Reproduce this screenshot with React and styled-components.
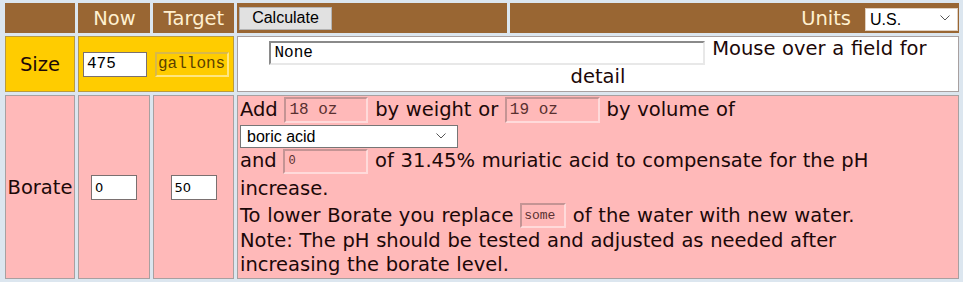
import React from 'react';
import styled, { createGlobalStyle } from 'styled-components';

const GlobalStyle = createGlobalStyle`
  html, body {
    margin: 0;
    padding: 0;
    background: #dce6ef;
  }
`;

const Grid = styled.div`
  display: grid;
  grid-template-columns: 70px 72px 81px 270px 449px;
  grid-template-rows: 30px 56px 184px;
  gap: 3px;
  padding: 3px 4px 3px 5px;
  width: max-content;
  font-family: 'DejaVu Sans', Verdana, sans-serif;
  font-size: 19.5px;
  word-spacing: 0.5px;
  color: #1c0808;
`;

const HeadCell = styled.div`
  background: #996633;
  color: #fff0d0;
  display: flex;
  align-items: center;
  justify-content: ${(p) => p.$justify || 'center'};
  gap: 14px;
  padding: 0 1px 0 2px;
  box-sizing: border-box;
`;

const Cell = styled.div`
  background: ${(p) => p.$bg};
  border: 1px solid ${(p) => p.$edge || '#a8a0a0'};
  box-sizing: border-box;
  display: flex;
  align-items: center;
  justify-content: ${(p) => p.$justify || 'center'};
  gap: 8px;
  padding-left: ${(p) => p.$pl || 0}px;
  grid-column: ${(p) => p.$span || 'auto'};
`;

const TextCell = styled.div`
  background: ${(p) => p.$bg};
  border: 1px solid #a8a0a0;
  box-sizing: border-box;
  grid-column: span 2;
  padding: ${(p) => p.$pad || '0 2px'};
  text-align: ${(p) => p.$align || 'left'};
  line-height: ${(p) => p.$lh || '24px'};
`;

const Button = styled.button`
  font-family: 'Liberation Sans', Arial, sans-serif;
  font-size: 16px;
  width: 93px;
  height: 23px;
  padding: 0;
  background: #e1e1e1;
  border: 1px solid #b4b4b4;
  color: #000;
`;

const SelectWrap = styled.span`
  position: relative;
  display: inline-block;
  vertical-align: top;
  width: ${(p) => p.$w}px;
  height: ${(p) => p.$h}px;
`;

const Select = styled.select`
  appearance: none;
  width: 100%;
  height: 100%;
  margin: 0;
  box-sizing: border-box;
  font-family: 'Liberation Sans', Arial, sans-serif;
  font-size: 16px;
  color: #000;
  background: #fff;
  border: 1px solid ${(p) => p.$edge || '#767676'};
  padding: 0 0 0 ${(p) => p.$pl || 6}px;
  border-radius: 0;
`;

const Chevron = styled.svg`
  position: absolute;
  right: ${(p) => p.$r || 12}px;
  top: 50%;
  margin-top: -3px;
  pointer-events: none;
`;

const Field = styled.input`
  box-sizing: border-box;
  width: ${(p) => p.$w}px;
  height: ${(p) => p.$h || 25}px;
  margin: 0;
  padding: 0 ${(p) => p.$px ?? 3}px;
  font-family: ${(p) => (p.$mono ? "'Liberation Mono', 'Courier New', monospace" : "'DejaVu Sans', Verdana, sans-serif")};
  font-size: ${(p) => p.$fs || 16}px;
  color: #000;
  background: #fff;
  border: 1px solid #7a7070;
  word-spacing: 0;
`;

const ReadField = styled(Field)`
  background: transparent;
  color: ${(p) => p.$ink || '#5a3030'};
  border: 2px solid;
  border-color: ${(p) => p.$dark} ${(p) => p.$light} ${(p) => p.$light} ${(p) => p.$dark};
`;

const HintField = styled(Field)`
  border: 2px solid;
  border-color: #8a8a8a #e8e8e8 #e8e8e8 #8a8a8a;
  vertical-align: top;
  margin-top: 4px;
`;

const Line = styled.div`
  display: flex;
  align-items: center;
  white-space: pre;
  min-height: ${(p) => p.$h || 24}px;
`;

const ChevronIcon = ({ r }) => (
  <Chevron $r={r} width="10" height="6" viewBox="0 0 10 6">
    <path d="M0.5 0.5 L5 5 L9.5 0.5" fill="none" stroke="#555" strokeWidth="1" />
  </Chevron>
);

const pinkDark = '#c49494';
const pinkLight = '#ffdada';

export default function App() {
  return (
    <>
      <GlobalStyle />
      <Grid>
        <HeadCell />
        <HeadCell>Now</HeadCell>
        <HeadCell>Target</HeadCell>
        <HeadCell $justify="flex-start">
          <Button>Calculate</Button>
        </HeadCell>
        <HeadCell $justify="flex-end">
          <span>Units</span>
          <SelectWrap $w={93} $h={23}>
            <Select $edge="#e0d0c0" $pl={4} defaultValue="us">
              <option value="us">U.S.</option>
              <option value="metric">Metric</option>
            </Select>
            <ChevronIcon r={8} />
          </SelectWrap>
        </HeadCell>

        <Cell $bg="#ffcc00" $edge="#b89a40">Size</Cell>
        <Cell $bg="#ffcc00" $edge="#b89a40" $span="span 2" $justify="flex-start" $pl={4}>
          <Field $w={64} $mono defaultValue="475" />
          <ReadField $w={74} $px={1} $mono $dark="#d9b84a" $light="#ffe680" $ink="#5a4000" readOnly defaultValue="gallons" />
        </Cell>
        <TextCell $bg="#ffffff" $align="center" $lh="23px" $pad="0 4px">
          <HintField $w={436} $h={24} $mono readOnly defaultValue="None" /> Mouse over a field for detail
        </TextCell>

        <Cell $bg="#ffb9b9">Borate</Cell>
        <Cell $bg="#ffb9b9">
          <Field $w={46} $h={25} $fs={13} defaultValue="0" />
        </Cell>
        <Cell $bg="#ffb9b9">
          <Field $w={46} $h={25} $fs={13} defaultValue="50" />
        </Cell>
        <TextCell $bg="#ffb9b9">
          <Line $h={28}>
            {'Add '}
            <ReadField $w={84} $h={26} $mono $dark={pinkDark} $light={pinkLight} readOnly defaultValue="18 oz" />
            {' by weight or '}
            <ReadField $w={95} $h={26} $mono $dark={pinkDark} $light={pinkLight} readOnly defaultValue="19 oz" />
            {' by volume of'}
          </Line>
          <Line $h={23}>
            <SelectWrap $w={218} $h={23}>
              <Select defaultValue="boric">
                <option value="boric">boric acid</option>
                <option value="borax">borax</option>
              </Select>
              <ChevronIcon r={12} />
            </SelectWrap>
          </Line>
          <Line $h={28}>
            {'and '}
            <ReadField $w={85} $h={25} $fs={12} $mono $dark={pinkDark} $light={pinkLight} readOnly defaultValue="0" />
            {' of 31.45% muriatic acid to compensate for the pH'}
          </Line>
          <Line $h={27}>increase.</Line>
          <Line $h={27}>
            {'To lower Borate you replace '}
            <ReadField $w={46} $h={25} $fs={13} $px={2} $mono $dark={pinkDark} $light={pinkLight} readOnly defaultValue="some" />
            {' of the water with new water.'}
          </Line>
          <div>
            Note: The pH should be tested and adjusted as needed after
            <br />
            increasing the borate level.
          </div>
        </TextCell>
      </Grid>
    </>
  );
}
